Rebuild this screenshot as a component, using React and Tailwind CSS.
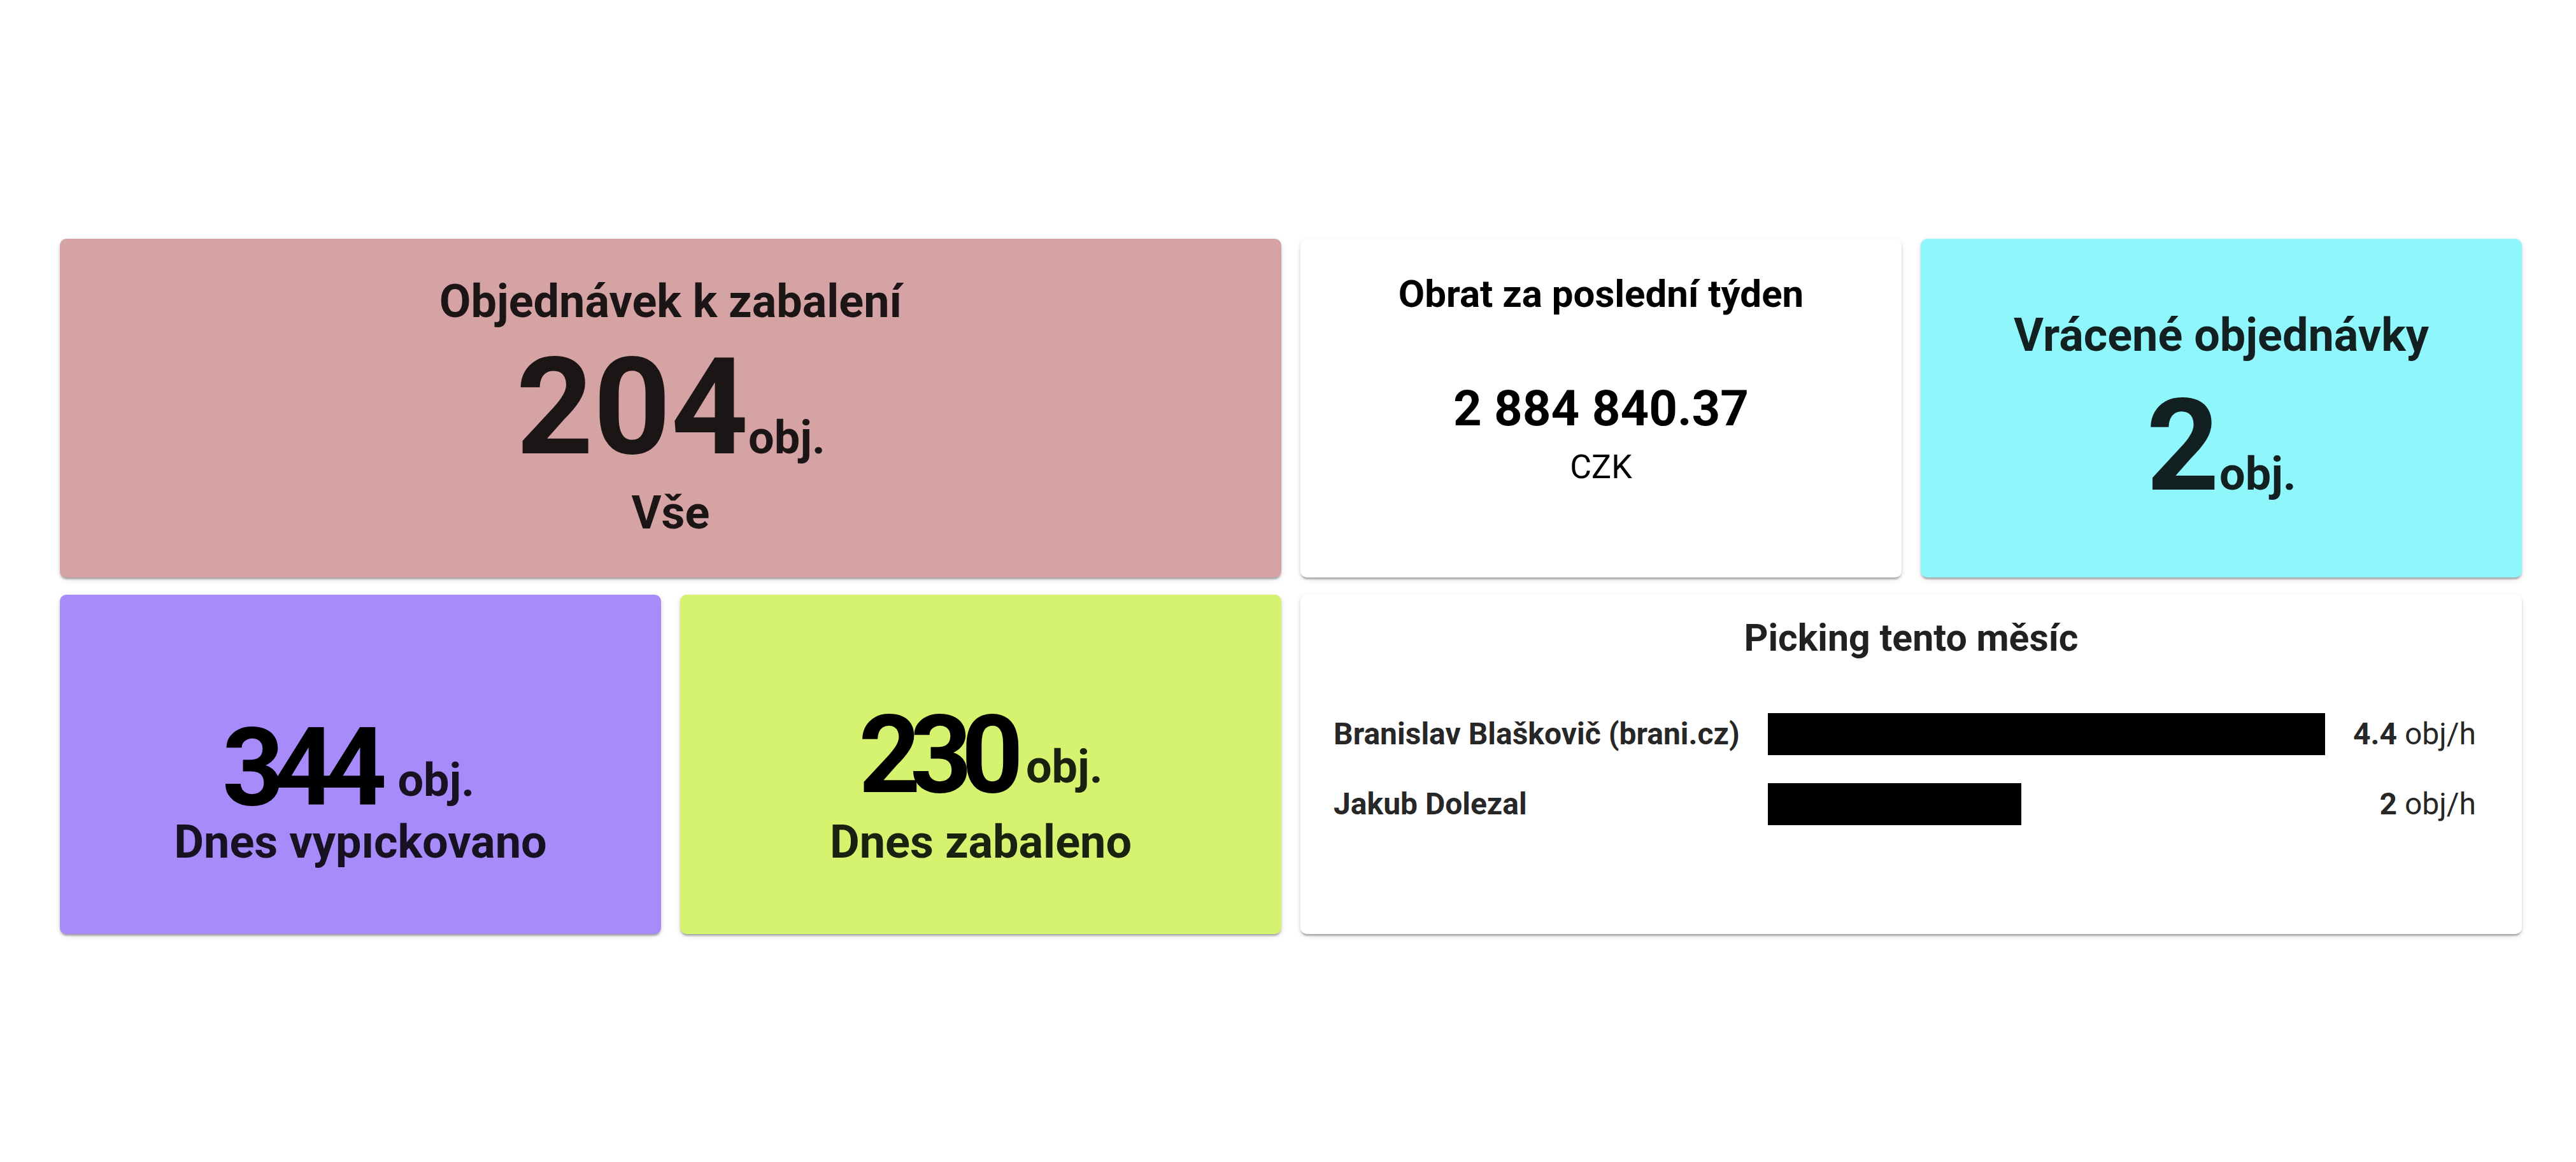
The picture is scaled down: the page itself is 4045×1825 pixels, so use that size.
const pickers = [
  { name: 'Branislav Blaškovič (brani.cz)', value: 4.4 },
  { name: 'Jakub Dolezal', value: 2 },
];

function Card({ className = '', children }) {
  return (
    <div
      className={`rounded-[10px] shadow-[0_5px_3px_-3px_rgba(0,0,0,0.2),0_3px_3px_0_rgba(0,0,0,0.14),0_3px_8px_0_rgba(0,0,0,0.12)] flex flex-col items-center text-center ${className}`}
    >
      {children}
    </div>
  );
}

function PickingCard() {
  const max = Math.max(...pickers.map(p => p.value));
  return (
    <Card className="col-span-2 bg-white pt-[32px] items-stretch">
      <div className="text-[59px] leading-[72px] font-bold text-black/87">Picking tento měsíc</div>
      <div className="mt-[82px] pl-[52px] pr-[72px] grid grid-cols-[auto_1fr_auto] gap-x-[44px] gap-y-[44px] items-center text-left">
        {pickers.map(p => (
          <div key={p.name} className="contents">
            <div className="text-[48px] leading-[66px] font-bold text-black/87 whitespace-nowrap">{p.name}</div>
            <div className="h-[66px]">
              <div className="h-full bg-black" style={{ width: `${(p.value / max) * 100}%` }} />
            </div>
            <div className="text-[48px] leading-[66px] text-black/87 text-right whitespace-nowrap">
              <span className="font-bold">{p.value}</span> obj/h
            </div>
          </div>
        ))}
      </div>
    </Card>
  );
}

export default function App() {
  return (
    <div className="min-h-[1825px] bg-white font-[Roboto,sans-serif] pt-[375px]">
      <div className="ml-[94px] w-[3866px] grid grid-cols-4 grid-rows-[532px_533px] gap-x-[30px] gap-y-[27px]">
        <Card className="col-span-2 bg-[#d5a3a3] text-black/87 pt-[54px]">
          <div className="text-[72px] leading-[90px] font-bold">Objednávek k zabalení</div>
          <div className="text-[212px] leading-[241px] font-bold">
            204<span className="text-[72px] leading-none">obj.</span>
          </div>
          <div className="text-[72px] leading-[92px] font-bold">Vše</div>
        </Card>

        <Card className="bg-white text-black pt-[51px]">
          <div className="text-[60px] leading-[72px] font-bold">Obrat za poslední týden</div>
          <div className="mt-[97px] text-[78px] leading-[94px] font-bold">2 884 840.37</div>
          <div className="mt-[14px] text-[52px] leading-[62px]">CZK</div>
        </Card>

        <Card className="bg-[#8ff7fc] text-black/87 pt-[107px]">
          <div className="text-[72px] leading-[90px] font-bold">Vrácené objednávky</div>
          <div className="mt-[9px] text-[200px] leading-[240px] font-bold">
            2<span className="text-[72px] leading-none">obj.</span>
          </div>
        </Card>

        <Card className="bg-[#a88bfa] pt-[200px]">
          <div className="text-[170px] leading-[144px] font-bold text-black">
            <span className="tracking-[-17px]">344</span>
            <span className="ml-[34px] pr-[38px] text-[72px] leading-none align-[14px] text-black/87">obj.</span>
          </div>
          <div className="text-[72px] leading-[90px] font-bold text-black/87">Dnes vypıckovano</div>
        </Card>

        <Card className="bg-[#d5f36e] pt-[180px]">
          <div className="text-[170px] leading-[144px] font-bold text-black">
            <span className="tracking-[-17px]">230</span>
            <span className="ml-[21px] text-[72px] leading-none align-[15px] text-black/87">obj.</span>
          </div>
          <div className="mt-[20px] text-[72px] leading-[90px] font-bold text-black/87">Dnes zabaleno</div>
        </Card>

        <PickingCard />
      </div>
    </div>
  );
}
